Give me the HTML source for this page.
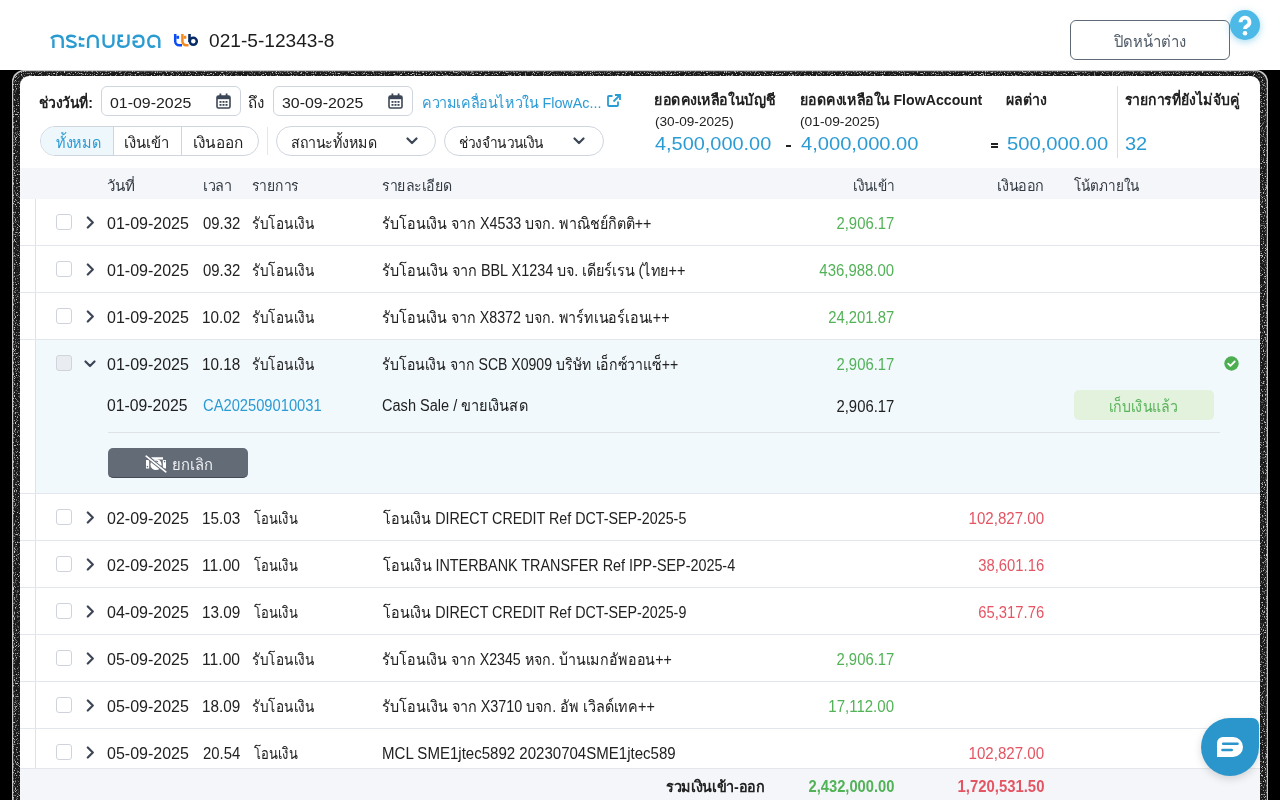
<!DOCTYPE html><html><head><meta charset="utf-8"><style>*{box-sizing:border-box;margin:0;padding:0}
html,body{width:1280px;height:800px;overflow:hidden;background:#000;font-family:"Liberation Sans",sans-serif}
.bx{position:absolute}
.tx{position:absolute;white-space:nowrap}
</style></head><body><div class="bx" style="left:0px;top:0px;width:1280px;height:70px;background:#fff"></div><svg class="bx" style="left:173px;top:33px" width="26" height="14" viewBox="0 0 26 14">
<path d="M2.2 1V8.3a3.9 3.9 0 0 0 3.9 3.9H9" stroke="#0a4df5" stroke-width="2.5" fill="none"/>
<rect x="3.4" y="2.8" width="2.7" height="3" fill="#0a4df5"/>
<path d="M9.4 1V8.3a3.9 3.9 0 0 0 3.9 3.9H15.5" stroke="#f5891f" stroke-width="2.5" fill="none"/>
<rect x="10.6" y="2.8" width="2.7" height="3" fill="#f5891f"/>
<path d="M16.5 1V9" stroke="#062a66" stroke-width="2.6"/>
<circle cx="20.3" cy="8.3" r="3.5" stroke="#062a66" stroke-width="2.5" fill="none"/></svg><svg class="bx" style="left:48px;top:28px" width="120" height="24" viewBox="0 0 120 24" fill="none" stroke="#2a9bd0" stroke-width="2.4">
<path d="M3 10.6C4.8 8.5 6.8 7.7 9.4 7.7C12.5 7.7 14.7 9.5 14.7 12.5V20"/><path d="M5.4 11.2V20"/>
<path d="M27.6 9.2C26.3 7.9 24.7 7.7 23.2 7.7C20.3 7.7 19.1 8.9 19.1 10.5C19.1 13.4 27.7 13.4 27.7 16.4C27.7 18.2 25.8 19 23.2 19C21.5 19 19.8 18.4 18.6 17.4"/>
<path d="M31.9 8.6V11.2H36.4M31.9 15V17.6H36.4" stroke-width="2.2"/>
<path d="M40.1 20V12.3C40.1 9.4 42.2 7.7 44.9 7.7C47.6 7.7 49.7 9.4 49.7 12.3V20"/>
<path d="M55.6 6.5V14.2C55.6 17 57.8 18.8 60.5 18.8C63.2 18.8 65.4 17 65.4 14.2V6.5"/>
<path d="M75 7.7H70.9V12.9H74.8M70.9 12.9C70.4 13.5 70.2 14.2 70.2 15.2C70.2 17.6 72.5 18.8 75.3 18.8C78.2 18.8 80.5 17.2 80.5 14.5V6.5"/>
<path d="M85.6 11.2C85.9 9 87.9 7.7 90.5 7.7C93.2 7.7 95.4 9.3 95.4 12.3V14.3C95.4 17.1 93.2 18.8 90.5 18.8C87.8 18.8 85.6 17.3 85.6 15V13.6H89.8"/>
<path d="M111.3 20V12.5C111.3 9.5 108.7 7.7 105.7 7.7C102.3 7.7 100.3 10 100.3 13.2C100.3 16.7 101.8 18.8 104.2 18.8C105.3 18.8 106.2 18.3 106.8 17.6"/>
</svg><div class="bx" style="left:1070px;top:20px;width:160px;height:40px;border:1.5px solid #5f6a78;border-radius:6px;background:#fff"></div><div class="bx" style="left:1230px;top:10px;width:30px;height:30px;border-radius:50%;background:#4cb9e6;box-shadow:0 2px 7px rgba(76,185,230,.5)"></div><svg class="bx" style="left:1236px;top:15px" width="18" height="22" viewBox="0 0 18 22"><path d="M4.5 7.2a4.5 4.5 0 1 1 6.3 4.1c-1.2.6-1.8 1.3-1.8 2.6" stroke="#fff" stroke-width="3.8" fill="none" stroke-linecap="butt"/><circle cx="9" cy="18.3" r="2.3" fill="#fff"/></svg><div class="bx" style="left:12px;top:70px;width:1256px;height:760px;border-radius:12px;background:#3a3a3a"></div><svg class="bx" style="left:0;top:70px" width="1280" height="730" viewBox="0 0 1280 730"><defs><filter id="nz" x="0" y="0" width="100%" height="100%"><feTurbulence type="fractalNoise" baseFrequency="0.9" numOctaves="2" seed="3"/><feColorMatrix type="matrix" values="0 0 0 0 0.55  0 0 0 0 0.55  0 0 0 0 0.55  5 0 0 0 -2.75"/></filter></defs>
<path fill-rule="evenodd" d="M24 0H1256A12 12 0 0 1 1268 12V730H12V12A12 12 0 0 1 24 0Z M29 6H1251A9 9 0 0 1 1260 15V730H20V15A9 9 0 0 1 29 6Z" fill="#1a1a1a"/>
<path fill-rule="evenodd" d="M24 0H1256A12 12 0 0 1 1268 12V730H12V12A12 12 0 0 1 24 0Z M25 1.2H1255A11.8 11.8 0 0 1 1266.8 13V730H13.2V13A11.8 11.8 0 0 1 25 1.2Z" fill="#c8c8c8"/>
<g clip-path="none"><rect x="12" y="0" width="1256" height="730" fill="#fff" filter="url(#nz)" mask="url(#bandmask)"/></g>
<mask id="bandmask"><path fill-rule="evenodd" d="M24 0H1256A12 12 0 0 1 1268 12V730H12V12A12 12 0 0 1 24 0Z M29 6H1251A9 9 0 0 1 1260 15V730H20V15A9 9 0 0 1 29 6Z" fill="#fff"/></mask>
</svg><div class="bx" style="left:20px;top:76px;width:1240px;height:740px;border-radius:9px;background:#fff"></div><div class="bx" style="left:101px;top:86px;width:140px;height:30px;border:1px solid #cfd5de;border-radius:6px"></div><div class="bx" style="left:273px;top:86px;width:140px;height:30px;border:1px solid #cfd5de;border-radius:6px"></div><svg class="bx" style="left:216px;top:93px" width="15" height="16" viewBox="0 0 15 16"><rect x="1" y="3" width="13" height="12" rx="1.5" fill="none" stroke="#3c4656" stroke-width="1.6"/><rect x="1" y="3" width="13" height="3.2" fill="#3c4656"/><rect x="3.5" y="0.5" width="1.8" height="4" fill="#3c4656"/><rect x="9.7" y="0.5" width="1.8" height="4" fill="#3c4656"/><g fill="#3c4656"><rect x="3.5" y="8" width="2" height="1.8"/><rect x="6.5" y="8" width="2" height="1.8"/><rect x="9.5" y="8" width="2" height="1.8"/><rect x="3.5" y="11" width="2" height="1.8"/><rect x="6.5" y="11" width="2" height="1.8"/><rect x="9.5" y="11" width="2" height="1.8"/></g></svg><svg class="bx" style="left:388px;top:93px" width="15" height="16" viewBox="0 0 15 16"><rect x="1" y="3" width="13" height="12" rx="1.5" fill="none" stroke="#3c4656" stroke-width="1.6"/><rect x="1" y="3" width="13" height="3.2" fill="#3c4656"/><rect x="3.5" y="0.5" width="1.8" height="4" fill="#3c4656"/><rect x="9.7" y="0.5" width="1.8" height="4" fill="#3c4656"/><g fill="#3c4656"><rect x="3.5" y="8" width="2" height="1.8"/><rect x="6.5" y="8" width="2" height="1.8"/><rect x="9.5" y="8" width="2" height="1.8"/><rect x="3.5" y="11" width="2" height="1.8"/><rect x="6.5" y="11" width="2" height="1.8"/><rect x="9.5" y="11" width="2" height="1.8"/></g></svg><svg class="bx" style="left:607px;top:94px" width="14" height="13" viewBox="0 0 14 13"><path d="M11 7.5v3.5a1 1 0 0 1-1 1H2a1 1 0 0 1-1-1V3a1 1 0 0 1 1-1h3.5" stroke="#2b9bd4" stroke-width="1.8" fill="none"/><path d="M8 1h5v5M13 1L6.5 7.5" stroke="#2b9bd4" stroke-width="1.8" fill="none"/></svg><div class="bx" style="left:40px;top:126px;width:219px;height:30px;border:1px solid #cfd5de;border-radius:15px"></div><div class="bx" style="left:41px;top:127px;width:72px;height:28px;background:#eef7fc;border-radius:14px 0 0 14px"></div><div class="bx" style="left:113px;top:127px;width:1px;height:28px;background:#cfd5de"></div><div class="bx" style="left:181px;top:127px;width:1px;height:28px;background:#cfd5de"></div><div class="bx" style="left:267px;top:127px;width:1px;height:28px;background:#e3e6ec"></div><div class="bx" style="left:276px;top:126px;width:160px;height:30px;border:1px solid #cfd5de;border-radius:15px"></div><div class="bx" style="left:444px;top:126px;width:160px;height:30px;border:1px solid #cfd5de;border-radius:15px"></div><svg class="bx" style="left:406px;top:137px" width="12" height="8" viewBox="0 0 12 8"><path d="M1.5 1.5L6 6l4.5-4.5" stroke="#3c4656" stroke-width="2.2" fill="none" stroke-linecap="round" stroke-linejoin="round"/></svg><svg class="bx" style="left:573px;top:137px" width="12" height="8" viewBox="0 0 12 8"><path d="M1.5 1.5L6 6l4.5-4.5" stroke="#3c4656" stroke-width="2.2" fill="none" stroke-linecap="round" stroke-linejoin="round"/></svg><div class="bx" style="left:786px;top:145px;width:5px;height:2px;background:#222"></div><div class="bx" style="left:991px;top:143px;width:7px;height:2px;background:#222"></div><div class="bx" style="left:991px;top:146px;width:7px;height:2px;background:#222"></div><div class="bx" style="left:1117px;top:86px;width:1px;height:72px;background:#d9dde4"></div><div class="bx" style="left:20px;top:168px;width:1240px;height:31px;background:#f4f6f9"></div><div class="bx" style="left:36px;top:340px;width:1224px;height:153px;background:#f2f9fd"></div><div class="bx" style="left:35px;top:199px;width:1px;height:600px;background:#dfe3e9"></div><div class="bx" style="left:20px;top:245px;width:1240px;height:1px;background:#e3e6ec"></div><div class="bx" style="left:20px;top:292px;width:1240px;height:1px;background:#e3e6ec"></div><div class="bx" style="left:20px;top:339px;width:1240px;height:1px;background:#e3e6ec"></div><div class="bx" style="left:20px;top:493px;width:1240px;height:1px;background:#e3e6ec"></div><div class="bx" style="left:20px;top:540px;width:1240px;height:1px;background:#e3e6ec"></div><div class="bx" style="left:20px;top:587px;width:1240px;height:1px;background:#e3e6ec"></div><div class="bx" style="left:20px;top:634px;width:1240px;height:1px;background:#e3e6ec"></div><div class="bx" style="left:20px;top:681px;width:1240px;height:1px;background:#e3e6ec"></div><div class="bx" style="left:20px;top:728px;width:1240px;height:1px;background:#e3e6ec"></div><div class="bx" style="left:56px;top:214px;width:16px;height:16px;border:1px solid #cfd4dc;border-radius:3px;background:#fff"></div><svg class="bx" style="left:86px;top:216px" width="9" height="13" viewBox="0 0 9 13"><path d="M1.8 1.5L6.8 6.5l-5 5" stroke="#3c4656" stroke-width="2.2" fill="none" stroke-linecap="round" stroke-linejoin="round"/></svg><div class="bx" style="left:56px;top:261px;width:16px;height:16px;border:1px solid #cfd4dc;border-radius:3px;background:#fff"></div><svg class="bx" style="left:86px;top:263px" width="9" height="13" viewBox="0 0 9 13"><path d="M1.8 1.5L6.8 6.5l-5 5" stroke="#3c4656" stroke-width="2.2" fill="none" stroke-linecap="round" stroke-linejoin="round"/></svg><div class="bx" style="left:56px;top:308px;width:16px;height:16px;border:1px solid #cfd4dc;border-radius:3px;background:#fff"></div><svg class="bx" style="left:86px;top:310px" width="9" height="13" viewBox="0 0 9 13"><path d="M1.8 1.5L6.8 6.5l-5 5" stroke="#3c4656" stroke-width="2.2" fill="none" stroke-linecap="round" stroke-linejoin="round"/></svg><div class="bx" style="left:56px;top:355px;width:16px;height:16px;border:1px solid #cfd4dc;border-radius:3px;background:#e9ecf0"></div><svg class="bx" style="left:84px;top:360px" width="12" height="8" viewBox="0 0 12 8"><path d="M1.5 1.5L6 6l4.5-4.5" stroke="#3c4656" stroke-width="2.2" fill="none" stroke-linecap="round" stroke-linejoin="round"/></svg><div class="bx" style="left:56px;top:509px;width:16px;height:16px;border:1px solid #cfd4dc;border-radius:3px;background:#fff"></div><svg class="bx" style="left:86px;top:511px" width="9" height="13" viewBox="0 0 9 13"><path d="M1.8 1.5L6.8 6.5l-5 5" stroke="#3c4656" stroke-width="2.2" fill="none" stroke-linecap="round" stroke-linejoin="round"/></svg><div class="bx" style="left:56px;top:556px;width:16px;height:16px;border:1px solid #cfd4dc;border-radius:3px;background:#fff"></div><svg class="bx" style="left:86px;top:558px" width="9" height="13" viewBox="0 0 9 13"><path d="M1.8 1.5L6.8 6.5l-5 5" stroke="#3c4656" stroke-width="2.2" fill="none" stroke-linecap="round" stroke-linejoin="round"/></svg><div class="bx" style="left:56px;top:603px;width:16px;height:16px;border:1px solid #cfd4dc;border-radius:3px;background:#fff"></div><svg class="bx" style="left:86px;top:605px" width="9" height="13" viewBox="0 0 9 13"><path d="M1.8 1.5L6.8 6.5l-5 5" stroke="#3c4656" stroke-width="2.2" fill="none" stroke-linecap="round" stroke-linejoin="round"/></svg><div class="bx" style="left:56px;top:650px;width:16px;height:16px;border:1px solid #cfd4dc;border-radius:3px;background:#fff"></div><svg class="bx" style="left:86px;top:652px" width="9" height="13" viewBox="0 0 9 13"><path d="M1.8 1.5L6.8 6.5l-5 5" stroke="#3c4656" stroke-width="2.2" fill="none" stroke-linecap="round" stroke-linejoin="round"/></svg><div class="bx" style="left:56px;top:697px;width:16px;height:16px;border:1px solid #cfd4dc;border-radius:3px;background:#fff"></div><svg class="bx" style="left:86px;top:699px" width="9" height="13" viewBox="0 0 9 13"><path d="M1.8 1.5L6.8 6.5l-5 5" stroke="#3c4656" stroke-width="2.2" fill="none" stroke-linecap="round" stroke-linejoin="round"/></svg><div class="bx" style="left:56px;top:744px;width:16px;height:16px;border:1px solid #cfd4dc;border-radius:3px;background:#fff"></div><svg class="bx" style="left:86px;top:746px" width="9" height="13" viewBox="0 0 9 13"><path d="M1.8 1.5L6.8 6.5l-5 5" stroke="#3c4656" stroke-width="2.2" fill="none" stroke-linecap="round" stroke-linejoin="round"/></svg><svg class="bx" style="left:1224px;top:356px" width="15" height="15" viewBox="0 0 15 15"><circle cx="7.5" cy="7.5" r="7.2" fill="#4cae50"/><path d="M4.2 7.6l2.2 2.2 4.3-4.3" stroke="#fff" stroke-width="1.8" fill="none" stroke-linecap="round" stroke-linejoin="round"/></svg><div class="bx" style="left:1074px;top:390px;width:140px;height:30px;border-radius:5px;background:#e3f2dc"></div><div class="bx" style="left:108px;top:432px;width:1112px;height:1px;background:#dfe3e9"></div><div class="bx" style="left:108px;top:448px;width:140px;height:30px;border-radius:5px;background:#636b77;border-bottom:1px solid #454b54"></div><svg class="bx" style="left:145px;top:455px" width="22" height="18" viewBox="0 0 22 18"><path d="M1 5h3.2v8.5H1z M17.8 5H21v8.5h-3.2z M6 2.2h12v2.2H8z" fill="#fff"/><circle cx="2.4" cy="11.6" r="0.8" fill="#636b77"/><circle cx="19.6" cy="6.6" r="0.8" fill="#636b77"/><circle cx="11" cy="9.5" r="5.6" fill="#fff"/><path d="M8.6 7.5a3 3 0 0 1 4.5 -0.6" stroke="#636b77" stroke-width="1" fill="none"/><path d="M1.2 1.2l19.6 15.6" stroke="#636b77" stroke-width="3.6"/><path d="M1.2 1.2l19.6 15.6" stroke="#fff" stroke-width="1.7" stroke-linecap="round"/></svg><div class="bx" style="left:20px;top:768px;width:1240px;height:40px;background:#f4f6f9;border-top:1px solid #e3e6ec"></div><div class="tx" style="top:32px;font-size:18px;line-height:18px;color:#1c1c1c;left:209.48px;transform-origin:0 0;transform:scaleX(1.0620);">021-5-12343-8</div><div class="tx" style="top:34px;font-size:16px;line-height:16px;color:#4f5967;left:1113.81px;transform-origin:0 0;transform:scaleX(0.9273);">ปิดหน้าต่าง</div><div class="tx" style="top:95px;font-size:15px;line-height:15px;color:#212121;font-weight:bold;left:39.07px;transform-origin:0 0;transform:scaleX(0.9286);">ช่วงวันที่:</div><div class="tx" style="top:95px;font-size:15.5px;line-height:15.5px;color:#212121;left:110.48px;transform-origin:0 0;transform:scaleX(1.0256);">01-09-2025</div><div class="tx" style="top:95px;font-size:15px;line-height:15px;color:#212121;left:248.16px;transform-origin:0 0;transform:scaleX(1.0089);">ถึง</div><div class="tx" style="top:95px;font-size:15.5px;line-height:15.5px;color:#212121;left:281.97px;transform-origin:0 0;transform:scaleX(1.0256);">30-09-2025</div><div class="tx" style="top:95px;font-size:15px;line-height:15px;color:#2b9bd4;left:422.23px;transform-origin:0 0;transform:scaleX(0.9548);">ความเคลื่อนไหวใน FlowAc...</div><div class="tx" style="top:135px;font-size:15px;line-height:15px;color:#2b9bd4;left:56.49px;transform-origin:0 0;transform:scaleX(0.9620);">ทั้งหมด</div><div class="tx" style="top:135px;font-size:15px;line-height:15px;color:#212121;left:124.02px;transform-origin:0 0;transform:scaleX(0.9884);">เงินเข้า</div><div class="tx" style="top:135px;font-size:15px;line-height:15px;color:#212121;left:193.22px;transform-origin:0 0;transform:scaleX(1.0266);">เงินออก</div><div class="tx" style="top:135px;font-size:15px;line-height:15px;color:#212121;left:291.44px;transform-origin:0 0;transform:scaleX(0.9483);">สถานะทั้งหมด</div><div class="tx" style="top:135px;font-size:15px;line-height:15px;color:#212121;left:458.96px;transform-origin:0 0;transform:scaleX(0.9165);">ช่วงจำนวนเงิน</div><div class="tx" style="top:92px;font-size:15px;line-height:15px;color:#212121;font-weight:bold;left:654.08px;transform-origin:0 0;transform:scaleX(0.9488);">ยอดคงเหลือในบัญชี</div><div class="tx" style="top:115px;font-size:13px;line-height:13px;color:#212121;left:654.98px;transform-origin:0 0;transform:scaleX(1.0473);">(30-09-2025)</div><div class="tx" style="top:134px;font-size:19px;line-height:19px;color:#2b9bd4;left:654.98px;transform-origin:0 0;transform:scaleX(1.0477);">4,500,000.00</div><div class="tx" style="top:92px;font-size:15px;line-height:15px;color:#212121;font-weight:bold;left:800.17px;transform-origin:0 0;transform:scaleX(0.9427);">ยอดคงเหลือใน FlowAccount</div><div class="tx" style="top:115px;font-size:13px;line-height:13px;color:#212121;left:800.02px;transform-origin:0 0;transform:scaleX(1.0603);">(01-09-2025)</div><div class="tx" style="top:134px;font-size:19px;line-height:19px;color:#2b9bd4;left:801.08px;transform-origin:0 0;transform:scaleX(1.0591);">4,000,000.00</div><div class="tx" style="top:92px;font-size:15px;line-height:15px;color:#212121;font-weight:bold;left:1006.09px;transform-origin:0 0;transform:scaleX(0.9405);">ผลต่าง</div><div class="tx" style="top:134px;font-size:19px;line-height:19px;color:#2b9bd4;left:1006.97px;transform-origin:0 0;transform:scaleX(1.0638);">500,000.00</div><div class="tx" style="top:92px;font-size:15px;line-height:15px;color:#212121;font-weight:bold;left:1125.07px;transform-origin:0 0;transform:scaleX(0.9318);">รายการที่ยังไม่จับคู่</div><div class="tx" style="top:134px;font-size:19px;line-height:19px;color:#2b9bd4;left:1124.95px;transform-origin:0 0;transform:scaleX(1.0526);">32</div><div class="tx" style="top:178px;font-size:15px;line-height:15px;color:#333a44;left:106.79px;transform-origin:0 0;transform:scaleX(1.0077);">วันที่</div><div class="tx" style="top:178px;font-size:15px;line-height:15px;color:#333a44;left:202.55px;transform-origin:0 0;transform:scaleX(0.9589);">เวลา</div><div class="tx" style="top:178px;font-size:15px;line-height:15px;color:#333a44;left:252.07px;transform-origin:0 0;transform:scaleX(0.9265);">รายการ</div><div class="tx" style="top:178px;font-size:15px;line-height:15px;color:#333a44;left:381.67px;transform-origin:0 0;transform:scaleX(0.9425);">รายละเอียด</div><div class="tx" style="top:178px;font-size:15px;line-height:15px;color:#333a44;right:385.55px;transform-origin:100% 0;transform:scaleX(0.9075);">เงินเข้า</div><div class="tx" style="top:178px;font-size:15px;line-height:15px;color:#333a44;right:236.04px;transform-origin:100% 0;transform:scaleX(0.9574);">เงินออก</div><div class="tx" style="top:178px;font-size:15px;line-height:15px;color:#333a44;left:1074.00px;transform-origin:0 0;transform:scaleX(0.9028);">โน้ตภายใน</div><div class="tx" style="top:216px;font-size:16px;line-height:16px;color:#212121;left:107.21px;transform-origin:0 0;transform:scaleX(1.0002);">01-09-2025</div><div class="tx" style="top:216px;font-size:16px;line-height:16px;color:#212121;left:203.04px;transform-origin:0 0;transform:scaleX(0.9295);">09.32</div><div class="tx" style="top:216px;font-size:16px;line-height:16px;color:#212121;left:252.15px;transform-origin:0 0;transform:scaleX(0.8472);">รับโอนเงิน</div><div class="tx" style="top:216px;font-size:16px;line-height:16px;color:#212121;left:382.16px;transform-origin:0 0;transform:scaleX(0.8917);">รับโอนเงิน จาก X4533 บจก. พาณิชย์กิตติ++</div><div class="tx" style="top:216px;font-size:16px;line-height:16px;color:#52b257;right:385.84px;transform-origin:100% 0;transform:scaleX(0.9279);">2,906.17</div><div class="tx" style="top:263px;font-size:16px;line-height:16px;color:#212121;left:107.21px;transform-origin:0 0;transform:scaleX(1.0002);">01-09-2025</div><div class="tx" style="top:263px;font-size:16px;line-height:16px;color:#212121;left:203.04px;transform-origin:0 0;transform:scaleX(0.9295);">09.32</div><div class="tx" style="top:263px;font-size:16px;line-height:16px;color:#212121;left:252.15px;transform-origin:0 0;transform:scaleX(0.8472);">รับโอนเงิน</div><div class="tx" style="top:263px;font-size:16px;line-height:16px;color:#212121;left:382.15px;transform-origin:0 0;transform:scaleX(0.9000);">รับโอนเงิน จาก BBL X1234 บจ. เดียร์เรน (ไทย++</div><div class="tx" style="top:263px;font-size:16px;line-height:16px;color:#52b257;right:385.84px;transform-origin:100% 0;transform:scaleX(0.9329);">436,988.00</div><div class="tx" style="top:310px;font-size:16px;line-height:16px;color:#212121;left:107.21px;transform-origin:0 0;transform:scaleX(1.0002);">01-09-2025</div><div class="tx" style="top:310px;font-size:16px;line-height:16px;color:#212121;left:202.07px;transform-origin:0 0;transform:scaleX(0.9539);">10.02</div><div class="tx" style="top:310px;font-size:16px;line-height:16px;color:#212121;left:252.15px;transform-origin:0 0;transform:scaleX(0.8472);">รับโอนเงิน</div><div class="tx" style="top:310px;font-size:16px;line-height:16px;color:#212121;left:382.17px;transform-origin:0 0;transform:scaleX(0.8894);">รับโอนเงิน จาก X8372 บจก. พาร์ทเนอร์เอนเ++</div><div class="tx" style="top:310px;font-size:16px;line-height:16px;color:#52b257;right:385.84px;transform-origin:100% 0;transform:scaleX(0.9271);">24,201.87</div><div class="tx" style="top:357px;font-size:16px;line-height:16px;color:#212121;left:107.21px;transform-origin:0 0;transform:scaleX(1.0002);">01-09-2025</div><div class="tx" style="top:357px;font-size:16px;line-height:16px;color:#212121;left:202.07px;transform-origin:0 0;transform:scaleX(0.9539);">10.18</div><div class="tx" style="top:357px;font-size:16px;line-height:16px;color:#212121;left:252.15px;transform-origin:0 0;transform:scaleX(0.8472);">รับโอนเงิน</div><div class="tx" style="top:357px;font-size:16px;line-height:16px;color:#212121;left:382.18px;transform-origin:0 0;transform:scaleX(0.8785);">รับโอนเงิน จาก SCB X0909 บริษัท เอ็กซ์วาแซ็++</div><div class="tx" style="top:357px;font-size:16px;line-height:16px;color:#52b257;right:385.84px;transform-origin:100% 0;transform:scaleX(0.9279);">2,906.17</div><div class="tx" style="top:511px;font-size:16px;line-height:16px;color:#212121;left:107.21px;transform-origin:0 0;transform:scaleX(1.0002);">02-09-2025</div><div class="tx" style="top:511px;font-size:16px;line-height:16px;color:#212121;left:202.07px;transform-origin:0 0;transform:scaleX(0.9539);">15.03</div><div class="tx" style="top:511px;font-size:16px;line-height:16px;color:#212121;left:254.18px;transform-origin:0 0;transform:scaleX(0.8093);">โอนเงิน</div><div class="tx" style="top:511px;font-size:16px;line-height:16px;color:#212121;left:383.05px;transform-origin:0 0;transform:scaleX(0.8929);">โอนเงิน DIRECT CREDIT Ref DCT-SEP-2025-5</div><div class="tx" style="top:511px;font-size:16px;line-height:16px;color:#e45563;right:235.83px;transform-origin:100% 0;transform:scaleX(0.9436);">102,827.00</div><div class="tx" style="top:558px;font-size:16px;line-height:16px;color:#212121;left:107.21px;transform-origin:0 0;transform:scaleX(1.0002);">02-09-2025</div><div class="tx" style="top:558px;font-size:16px;line-height:16px;color:#212121;left:202.03px;transform-origin:0 0;transform:scaleX(0.9797);">11.00</div><div class="tx" style="top:558px;font-size:16px;line-height:16px;color:#212121;left:254.18px;transform-origin:0 0;transform:scaleX(0.8093);">โอนเงิน</div><div class="tx" style="top:558px;font-size:16px;line-height:16px;color:#212121;left:383.05px;transform-origin:0 0;transform:scaleX(0.8972);">โอนเงิน INTERBANK TRANSFER Ref IPP-SEP-2025-4</div><div class="tx" style="top:558px;font-size:16px;line-height:16px;color:#e45563;right:235.84px;transform-origin:100% 0;transform:scaleX(0.9271);">38,601.16</div><div class="tx" style="top:605px;font-size:16px;line-height:16px;color:#212121;left:107.21px;transform-origin:0 0;transform:scaleX(1.0002);">04-09-2025</div><div class="tx" style="top:605px;font-size:16px;line-height:16px;color:#212121;left:202.07px;transform-origin:0 0;transform:scaleX(0.9539);">13.09</div><div class="tx" style="top:605px;font-size:16px;line-height:16px;color:#212121;left:254.18px;transform-origin:0 0;transform:scaleX(0.8093);">โอนเงิน</div><div class="tx" style="top:605px;font-size:16px;line-height:16px;color:#212121;left:383.05px;transform-origin:0 0;transform:scaleX(0.8929);">โอนเงิน DIRECT CREDIT Ref DCT-SEP-2025-9</div><div class="tx" style="top:605px;font-size:16px;line-height:16px;color:#e45563;right:235.84px;transform-origin:100% 0;transform:scaleX(0.9271);">65,317.76</div><div class="tx" style="top:652px;font-size:16px;line-height:16px;color:#212121;left:107.21px;transform-origin:0 0;transform:scaleX(1.0002);">05-09-2025</div><div class="tx" style="top:652px;font-size:16px;line-height:16px;color:#212121;left:202.03px;transform-origin:0 0;transform:scaleX(0.9797);">11.00</div><div class="tx" style="top:652px;font-size:16px;line-height:16px;color:#212121;left:252.15px;transform-origin:0 0;transform:scaleX(0.8472);">รับโอนเงิน</div><div class="tx" style="top:652px;font-size:16px;line-height:16px;color:#212121;left:382.17px;transform-origin:0 0;transform:scaleX(0.8886);">รับโอนเงิน จาก X2345 หจก. บ้านเมกอัพออน++</div><div class="tx" style="top:652px;font-size:16px;line-height:16px;color:#52b257;right:385.84px;transform-origin:100% 0;transform:scaleX(0.9279);">2,906.17</div><div class="tx" style="top:699px;font-size:16px;line-height:16px;color:#212121;left:107.21px;transform-origin:0 0;transform:scaleX(1.0002);">05-09-2025</div><div class="tx" style="top:699px;font-size:16px;line-height:16px;color:#212121;left:202.07px;transform-origin:0 0;transform:scaleX(0.9539);">18.09</div><div class="tx" style="top:699px;font-size:16px;line-height:16px;color:#212121;left:252.15px;transform-origin:0 0;transform:scaleX(0.8472);">รับโอนเงิน</div><div class="tx" style="top:699px;font-size:16px;line-height:16px;color:#212121;left:382.15px;transform-origin:0 0;transform:scaleX(0.8984);">รับโอนเงิน จาก X3710 บจก. อัพ เวิลด์เทค++</div><div class="tx" style="top:699px;font-size:16px;line-height:16px;color:#52b257;right:385.83px;transform-origin:100% 0;transform:scaleX(0.9385);">17,112.00</div><div class="tx" style="top:746px;font-size:16px;line-height:16px;color:#212121;left:107.21px;transform-origin:0 0;transform:scaleX(1.0002);">05-09-2025</div><div class="tx" style="top:746px;font-size:16px;line-height:16px;color:#212121;left:203.04px;transform-origin:0 0;transform:scaleX(0.9295);">20.54</div><div class="tx" style="top:746px;font-size:16px;line-height:16px;color:#212121;left:254.18px;transform-origin:0 0;transform:scaleX(0.8093);">โอนเงิน</div><div class="tx" style="top:746px;font-size:16px;line-height:16px;color:#212121;left:382.09px;transform-origin:0 0;transform:scaleX(0.9397);">MCL SME1jtec5892 20230704SME1jtec589</div><div class="tx" style="top:746px;font-size:16px;line-height:16px;color:#e45563;right:235.83px;transform-origin:100% 0;transform:scaleX(0.9436);">102,827.00</div><div class="tx" style="top:398px;font-size:16px;line-height:16px;color:#212121;left:107.21px;transform-origin:0 0;transform:scaleX(0.9840);">01-09-2025</div><div class="tx" style="top:398px;font-size:16px;line-height:16px;color:#2b9bd4;left:203.04px;transform-origin:0 0;transform:scaleX(0.9199);">CA202509010031</div><div class="tx" style="top:398px;font-size:16px;line-height:16px;color:#212121;left:381.96px;transform-origin:0 0;transform:scaleX(0.9095);">Cash Sale / ขายเงินสด</div><div class="tx" style="top:399px;font-size:16px;line-height:16px;color:#212121;right:385.84px;transform-origin:100% 0;transform:scaleX(0.9279);">2,906.17</div><div class="tx" style="top:399px;font-size:16px;line-height:16px;color:#5ab35e;left:1109.18px;transform-origin:0 0;transform:scaleX(0.8829);">เก็บเงินแล้ว</div><div class="tx" style="top:457px;font-size:15px;line-height:15px;color:#eef0f2;left:171.52px;transform-origin:0 0;transform:scaleX(0.9872);">ยกเลิก</div><div class="tx" style="top:779px;font-size:15px;line-height:15px;color:#212121;font-weight:bold;left:665.86px;transform-origin:0 0;transform:scaleX(0.9574);">รวมเงินเข้า-ออก</div><div class="tx" style="top:779px;font-size:16px;line-height:16px;color:#52b257;font-weight:bold;right:385.56px;transform-origin:100% 0;transform:scaleX(0.9196);">2,432,000.00</div><div class="tx" style="top:779px;font-size:16px;line-height:16px;color:#e45563;font-weight:bold;right:235.84px;transform-origin:100% 0;transform:scaleX(0.9304);">1,720,531.50</div><div class="bx" style="left:1201px;top:718px;width:58px;height:58px;border-radius:29px 7px 29px 29px;background:#2b96cc;box-shadow:0 3px 8px rgba(0,0,0,.15)"></div><svg class="bx" style="left:1217px;top:737px" width="26" height="20" viewBox="0 0 26 20"><path d="M6 0H16A10 10 0 0 1 16 20H0V6A6 6 0 0 1 6 0Z" fill="#fff"/><path d="M6.2 6.8H20.5M5.5 13H14.7" stroke="#2b96cc" stroke-width="2.6" stroke-linecap="round"/></svg></body></html>
